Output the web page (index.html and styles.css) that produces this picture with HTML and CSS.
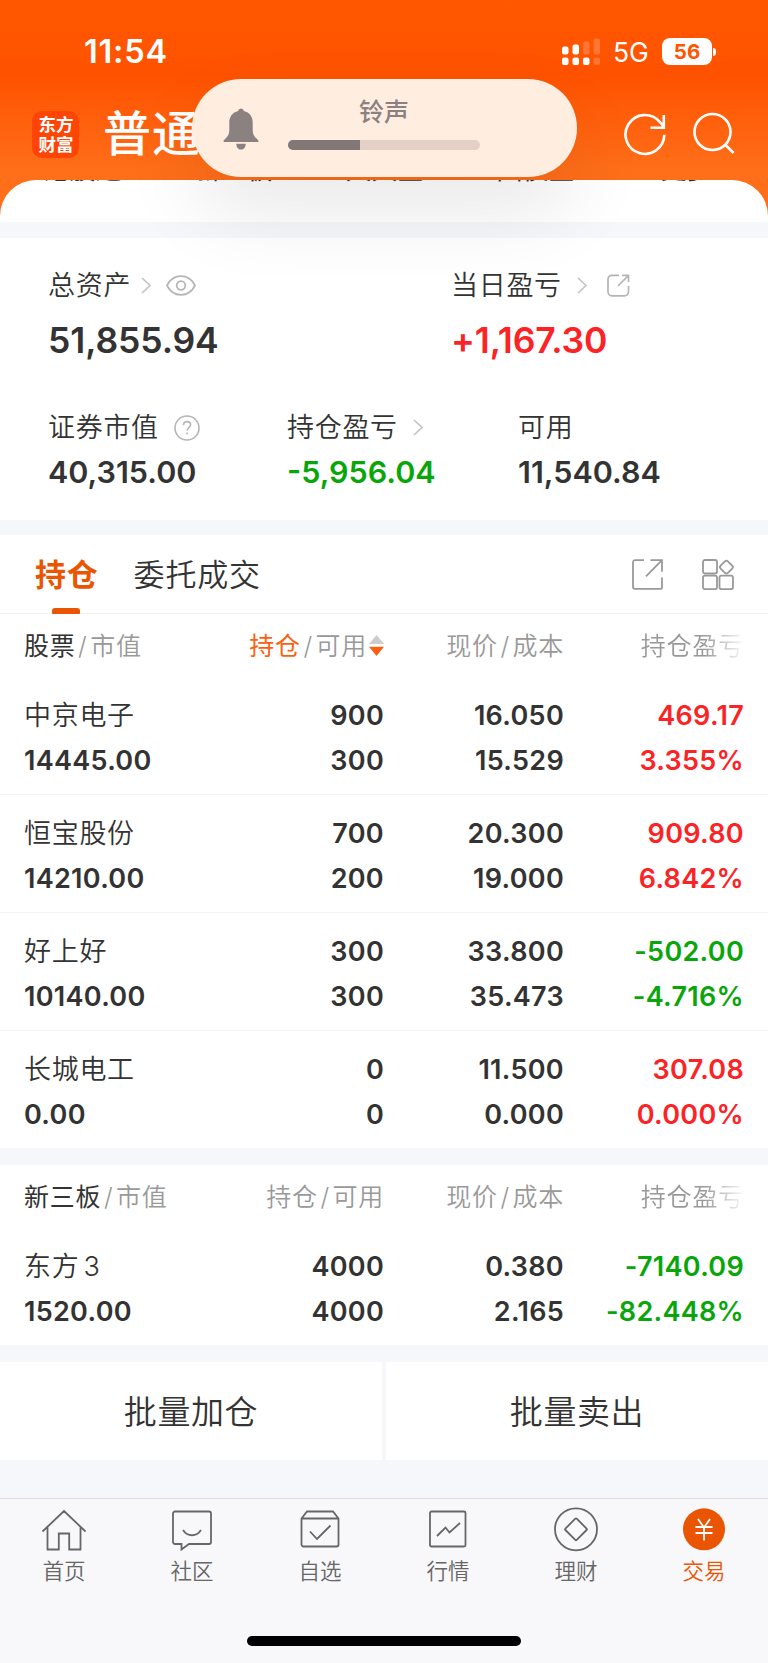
FILE: index.html
```html
<!DOCTYPE html>
<html lang="zh-CN">
<head>
	<meta charset="utf-8">
	<title>普通交易</title>
	<link rel="stylesheet" href="styles.css">
</head>
<body>

	<div class="header">
		<div class="status-bar">
			<span class="time">11:54</span>
			<svg class="signal" width="39" height="27" viewBox="0 0 39 27" fill="#fff">
				<rect x="0" y="8.500" width="6.500" height="8" rx="2"/>
				<rect x="10.500" y="6.500" width="6.500" height="10" rx="2"/>
				<rect x="21" y="3.500" width="6.500" height="13" rx="2" opacity="0.2"/>
				<rect x="31.500" y="0.500" width="6.500" height="16" rx="2" opacity="0.2"/>
				<rect x="0" y="19.500" width="6.500" height="7.500" rx="2"/>
				<rect x="10.500" y="19.500" width="6.500" height="7.500" rx="2"/>
				<rect x="21" y="19.500" width="6.500" height="7.500" rx="2"/>
				<rect x="31.500" y="19.500" width="6.500" height="7.500" rx="2" opacity="0.2"/>
			</svg>
			<span class="network">5G</span>
			<span class="battery">56</span>
			<span class="battery-tip"></span>
		</div>
		<div class="title-bar">
			<div class="logo">东方<br>财富</div>
			<div class="title">普通</div>
			<svg class="icon-refresh" width="44" height="44" viewBox="0 0 44 44" fill="none" stroke="#fff" stroke-width="2.600">
				<path d="M41.300 22.800A19.400 19.400 0 1 1 36.500 9.700L40 13.500M40.800 3v12.700H27.500"/>
			</svg>
			<svg class="icon-search" width="44" height="44" viewBox="0 0 44 44" fill="none" stroke="#fff" stroke-width="2.600">
				<circle cx="20.500" cy="20" r="18"/>
				<path d="M33 32.500l8.500 8.500"/>
			</svg>
		</div>
	</div>

	<div class="sheet-wrap">
		<div class="sheet">
			<div class="menu">
				<span>港股通</span><span>新三板</span><span>天天宝</span><span>国债宝</span><span>更多</span>
			</div>
		</div>
	</div>

	<!-- 音量提示 -->
	<div class="volume">
		<svg class="bell" width="36" height="42" viewBox="0 0 36 42" fill="#8b8180">
			<path d="M18 0.500a3 3 0 0 0-2.900 2.600C9.500 4.500 6.300 8.800 6.300 14.500v7.500c0 4-1.300 6-3.500 8.200C1.300 31.700.5 32.300.5 33.200c0 .6.400.8 1 .8h33c.6 0 1-.2 1-.8 0-.9-.8-1.500-2.300-3-2.200-2.200-3.500-4.200-3.500-8.200v-7.500c0-5.700-3.200-10-8.800-11.400A3 3 0 0 0 18 .5z"/>
			<path d="M13.300 35.700h9.400c0 3.700-2 5.800-4.700 5.800s-4.700-2.100-4.700-5.800z"/>
		</svg>
		<div class="volume-body">
			<div class="volume-label">铃声</div>
			<div class="volume-track"><div class="volume-fill" style="width:37.500%"></div></div>
		</div>
	</div>

	<div class="assets">
		<div class="assets-main">
			<div class="asset">
				<div class="asset-label">总资产
					<svg class="arrow" width="10" height="17" viewBox="0 0 10 17"><path d="M1 1l8 7.500L1 16"/></svg>
					<svg class="icon-eye" width="30" height="21" viewBox="0 0 30 21" fill="none" stroke="#b5b5b5" stroke-width="1.700">
						<path d="M1 10.500C4 4.500 9 1.200 15 1.200s11 3.300 14 9.300c-3 6-8 9.300-14 9.300S4 16.500 1 10.500z"/>
						<circle cx="15" cy="10.500" r="4.300"/>
					</svg>
				</div>
				<div class="asset-total">51,855.94</div>
			</div>
			<div class="asset">
				<div class="asset-label">当日盈亏
					<svg class="arrow day" width="10" height="17" viewBox="0 0 10 17"><path d="M1 1l8 7.500L1 16"/></svg>
					<svg class="icon-share" width="23" height="23" viewBox="0 0 23 23" fill="none" stroke="#b5b5b5" stroke-width="1.700">
						<path d="M12 1.300H5A4 4 0 0 0 1 5.300v12.500a4 4 0 0 0 4 4h12.500a4 4 0 0 0 4-4V12"/>
						<path d="M15 1.300h6.500V8M21.500 1.300L11 12"/>
					</svg>
				</div>
				<div class="asset-total red">+1,167.30</div>
			</div>
		</div>
		<div class="assets-sub">
			<div class="asset">
				<div class="asset-label">证券市值
					<svg class="icon-help" width="26" height="26" viewBox="0 0 26 26" fill="none" stroke="#b5b5b5" stroke-width="1.600">
						<circle cx="13" cy="13" r="12"/>
						<path d="M9.500 10.300c0-2.200 1.500-3.700 3.600-3.700s3.500 1.300 3.500 3.200c0 2.700-3.500 3.200-3.500 6M13.100 17.500v2"/>
					</svg>
				</div>
				<div class="asset-value">40,315.00</div>
			</div>
			<div class="asset">
				<div class="asset-label">持仓盈亏
					<svg class="arrow hold" width="10" height="17" viewBox="0 0 10 17"><path d="M1 1l8 7.500L1 16"/></svg>
				</div>
				<div class="asset-value green">-5,956.04</div>
			</div>
			<div class="asset">
				<div class="asset-label">可用</div>
				<div class="asset-value">11,540.84</div>
			</div>
		</div>
	</div>

	<div class="tabs">
		<div class="tab active">持仓</div>
		<div class="tab">委托成交</div>
		<svg class="icon-export" width="31" height="31" viewBox="0 0 31 31" fill="none" stroke="#999" stroke-width="1.800">
			<path d="M12 1.200H3a2 2 0 0 0-2 2v24.600a2 2 0 0 0 2 2h26a1 1 0 0 0 1-1V18.500"/>
			<path d="M18.500 1.200H30v11.500M30 1.200L14 17.300"/>
		</svg>
		<svg class="icon-grid" width="33" height="31" viewBox="0 0 33 31" fill="none" stroke="#999" stroke-width="1.800">
			<rect x="1" y="1" width="14" height="13.500" rx="2"/>
			<rect x="1" y="16.700" width="14" height="13.500" rx="2"/>
			<rect x="17.500" y="16.700" width="13.500" height="13.500" rx="2"/>
			<rect x="19.300" y="3" width="10.200" height="10.200" rx="2" transform="rotate(45 24.400 8.100)"/>
		</svg>
	</div>

	<div class="table">
		<div class="thead">
			<div><b>股票</b><i>/</i>市值</div>
			<div><em>持仓</em><i>/</i>可用<svg class="sort" width="15" height="21" viewBox="0 0 15 21"><path d="M7.500 0L15 9H0z" fill="#ccc"/><path d="M0 11.700h15L7.500 21z" fill="#fd5f12"/></svg></div>
			<div>现价<i>/</i>成本</div>
			<div class="fade">持仓盈亏</div>
		</div>
		<div class="row">
			<div><span class="name">中京电子</span>14445.00</div>
			<div>900<br>300</div>
			<div>16.050<br>15.529</div>
			<div class="red">469.17<br>3.355%</div>
		</div>
		<div class="row">
			<div><span class="name">恒宝股份</span>14210.00</div>
			<div>700<br>200</div>
			<div>20.300<br>19.000</div>
			<div class="red">909.80<br>6.842%</div>
		</div>
		<div class="row">
			<div><span class="name">好上好</span>10140.00</div>
			<div>300<br>300</div>
			<div>33.800<br>35.473</div>
			<div class="green">-502.00<br>-4.716%</div>
		</div>
		<div class="row">
			<div><span class="name">长城电工</span>0.00</div>
			<div>0<br>0</div>
			<div>11.500<br>0.000</div>
			<div class="red">307.08<br>0.000%</div>
		</div>
	</div>

	<div class="table neeq">
		<div class="thead">
			<div><b>新三板</b><i>/</i>市值</div>
			<div>持仓<i>/</i>可用</div>
			<div>现价<i>/</i>成本</div>
			<div class="fade">持仓盈亏</div>
		</div>
		<div class="row">
			<div><span class="name">东方<span class="digit">3</span></span>1520.00</div>
			<div>4000<br>4000</div>
			<div>0.380<br>2.165</div>
			<div class="green">-7140.09<br>-82.448%</div>
		</div>
	</div>

	<div class="actions">
		<div class="action">批量加仓</div>
		<div class="action">批量卖出</div>
	</div>

	<div class="nav">
		<div class="nav-item">
			<svg width="46" height="46" viewBox="0 0 46 46">
				<path d="M1.500 24.500L23 4l21.500 20.500M6.500 20.500v22h11.300V26.500h10.400v16h11.300v-22"/>
			</svg>
			首页
		</div>
		<div class="nav-item">
			<svg width="46" height="46" viewBox="0 0 46 46">
				<path d="M6 4.500h34a2 2 0 0 1 2 2V35a2 2 0 0 1-2 2H20l-7.500 5.500V37H6a2 2 0 0 1-2-2V6.500a2 2 0 0 1 2-2z"/>
				<path d="M14 23c4.500 7 13.500 7 18 0"/>
			</svg>
			社区
		</div>
		<div class="nav-item">
			<svg width="46" height="46" viewBox="0 0 46 46">
				<path d="M4.500 11.500L10 4.500h26l5.500 7v26a2 2 0 0 1-2 2h-33a2 2 0 0 1-2-2zM4.500 11.500h37M13 24.500l7 7.500 13.500-13.500"/>
			</svg>
			自选
		</div>
		<div class="nav-item">
			<svg width="46" height="46" viewBox="0 0 46 46">
				<rect x="5" y="4.500" width="35.500" height="35" rx="1.500"/>
				<path d="M12 29l8.500-8.500 4 5L35 16"/>
			</svg>
			行情
		</div>
		<div class="nav-item">
			<svg width="46" height="46" viewBox="0 0 46 46">
				<circle cx="23" cy="22.300" r="21"/>
				<rect x="15" y="14.300" width="16" height="16" rx="1" transform="rotate(45 23 22.300)"/>
			</svg>
			理财
		</div>
		<div class="nav-item active">
			<svg width="46" height="46" viewBox="0 0 46 46">
				<circle cx="23" cy="22.300" r="21" fill="#ea5504" stroke="none"/>
				<path d="M17 12l6 8.500 6-8.500M23 20v13.500M14.500 20h17M14.500 26h17" stroke="#fff"/>
			</svg>
			交易
		</div>
	</div>
	<div class="home-indicator"></div>

</body>
</html>
```
FILE: styles.css
```css
* {
	box-sizing: border-box;
}
body {
	margin: 0;
	width: 768px;
	height: 1663px;
	overflow: hidden;
	position: relative;
	background: #f6f7fa;
	color: #333;
	font-family: Inter, "Noto Sans CJK SC", sans-serif;
}
svg {
	display: block;
	flex: none;
}
.red {
	color: #fc2326;
}
.green {
	color: #09a60b;
}

/* 顶部 */
.header {
	height: 180px;
	background: linear-gradient(#ff5800, #ff5200 75px, #ff6e19 170px);
	color: #fff;
}
.status-bar {
	display: flex;
	align-items: center;
	height: 79px;
	padding: 24px 0 0 84px;
}
.time {
	width: 478px;
	font-size: 32.500px;
	font-weight: 600;
	letter-spacing: 0.800px;
	line-height: 40px;
}
.network {
	width: 48px;
	margin-left: 12px;
	font-size: 26.500px;
	line-height: 40px;
}
.battery {
	width: 50px;
	height: 27px;
	margin-left: 1px;
	border-radius: 8px;
	background: #fff;
	color: #ff5500;
	font-size: 20.500px;
	font-weight: 700;
	line-height: 28px;
	text-align: center;
}
.battery-tip {
	width: 3px;
	height: 8px;
	margin-left: 1px;
	border-radius: 0 3px 3px 0;
	background: #fff;
}
.title-bar {
	display: flex;
	align-items: center;
	height: 101px;
	padding: 9px 32px 0 32px;
}
.logo {
	width: 47px;
	height: 47px;
	padding: 4px 0 0 1px;
	border-radius: 10px;
	background: #ff4505;
	font-size: 17.500px;
	font-weight: 700;
	line-height: 20px;
	text-align: center;
}
.title {
	flex: 1;
	margin-left: 24px;
	font-size: 48px;
	font-weight: 500;
	letter-spacing: 1px;
	line-height: 60px;
}
.icon-search {
	margin-left: 25px;
}

.sheet-wrap {
	height: 42px;
	background: #ff6e19;
}
.sheet {
	height: 42px;
	overflow: hidden;
	border-radius: 36px 36px 0 0;
	background: #fff;
}
.menu {
	display: grid;
	grid-template-columns: repeat(5, 151px);
	margin-top: -27px;
	padding-left: 7px;
	font-size: 26px;
	line-height: 34px;
	text-align: center;
}

/* 浮在页面上的音量提示 */
.volume {
	position: absolute;
	left: 192px;
	top: 79px;
	display: flex;
	width: 385px;
	height: 98px;
	padding: 29px 97px 0 31px;
	border-radius: 49px;
	background: #ffeee0;
	box-shadow: 0 36px 80px rgba(0, 0, 0, 0.090);
}
.volume-body {
	flex: 1;
	margin-left: 29px;
	margin-top: -12px;
}
.volume-label {
	color: #8b8180;
	font-size: 25px;
	font-weight: 500;
	line-height: 32px;
	text-align: center;
}
.volume-track {
	height: 10px;
	margin-top: 12px;
	overflow: hidden;
	border-radius: 5px;
	background: #e4d0c6;
}
.volume-fill {
	height: 10px;
	background: #817776;
}

/* 资产 */
.assets {
	height: 282px;
	margin-top: 16px;
	padding: 29px 48px 0;
	background: #fff;
}
.assets-main {
	display: grid;
	grid-template-columns: 403px 1fr;
	height: 142px;
}
.assets-sub {
	display: grid;
	grid-template-columns: 239px 231px 1fr;
}
.asset-label {
	display: flex;
	align-items: center;
	height: 37px;
	font-size: 27px;
	font-weight: 350;
	letter-spacing: 0.700px;
	line-height: 37px;
	white-space: nowrap;
}
.arrow {
	margin-left: 10px;
	fill: none;
	stroke: #c4c4c4;
	stroke-width: 1.700;
}
.arrow.day,
.arrow.hold {
	margin-left: 15px;
}
.icon-eye {
	margin-left: 15px;
}
.icon-share {
	margin-left: 20px;
}
.icon-help {
	margin-left: 15px;
}
.asset-total {
	margin-top: 15px;
	font-size: 35.500px;
	font-weight: 600;
	letter-spacing: -0.100px;
	line-height: 44px;
}
.asset-value {
	margin-top: 8px;
	font-size: 30.500px;
	font-weight: 600;
	line-height: 36px;
}

/* 持仓 */
.tabs {
	display: flex;
	align-items: center;
	height: 79px;
	margin-top: 15px;
	padding: 0 33px 0 35px;
	border-bottom: 1px solid #efeff1;
	background: #fff;
}
.tab {
	position: relative;
	height: 78px;
	margin-right: 35px;
	font-size: 31px;
	font-weight: 350;
	letter-spacing: 0.800px;
	line-height: 80px;
}
.tab.active {
	color: #ea5504;
	font-weight: 700;
}
.tab.active::after {
	content: "";
	position: absolute;
	left: 17px;
	bottom: -1px;
	width: 28px;
	height: 6px;
	border-radius: 3px 3px 1px 1px;
	background: #ea5504;
}
.icon-export {
	margin-left: auto;
}
.icon-grid {
	margin-left: 39px;
}
.table {
	background: #fff;
}
.thead,
.row {
	display: grid;
	grid-template-columns: 196px 164px 180px 180px;
	padding: 0 24px;
	text-align: right;
}
.thead > :first-child,
.row > :first-child {
	text-align: left;
}
.thead {
	height: 63px;
	color: #999;
	font-size: 25px;
	font-weight: 350;
	letter-spacing: 0.800px;
	line-height: 64px;
	white-space: nowrap;
}
.thead b {
	color: #333;
	font-weight: 400;
}
.thead em {
	color: #fd5f12;
	font-style: normal;
	font-weight: 400;
}
.thead i {
	margin: 0 2.500px;
	font-style: normal;
}
.sort {
	display: inline-block;
	margin-left: 2px;
	vertical-align: -1px;
}
.fade {
	-webkit-mask-image: linear-gradient(90deg, #000 140px, transparent 182px);
	mask-image: linear-gradient(90deg, #000 140px, transparent 182px);
}
.row {
	height: 118px;
	padding-top: 17px;
	border-bottom: 1px solid #f4f4f6;
	font-size: 27px;
	font-weight: 600;
	letter-spacing: 0.300px;
	line-height: 44.500px;
}
.row:last-child {
	height: 117px;
	border-bottom: 0;
}
.name {
	display: block;
	font-weight: 350;
	letter-spacing: 0.700px;
}
.digit {
	margin-left: 4px;
}
.neeq {
	margin-top: 17px;
}

.actions {
	display: grid;
	grid-template-columns: 382px 382px;
	gap: 4px;
	margin-top: 17px;
}
.action {
	height: 98px;
	background: #fff;
	font-size: 33px;
	font-weight: 350;
	letter-spacing: 0.600px;
	line-height: 101px;
	text-align: center;
}

/* 底部导航 */
.nav {
	display: grid;
	grid-template-columns: repeat(6, 128px);
	height: 165px;
	margin-top: 38px;
	padding-top: 8px;
	border-top: 1px solid #dedee2;
	background: #f8f8fb;
}
.nav-item {
	color: #666;
	font-size: 21.500px;
	font-weight: 350;
	line-height: 36px;
	text-align: center;
}
.nav-item svg {
	margin: 0 auto;
	fill: none;
	stroke: #666;
	stroke-width: 1.800;
}
.nav-item.active {
	color: #ea5504;
}
.home-indicator {
	position: absolute;
	left: 247px;
	bottom: 17px;
	width: 274px;
	height: 10px;
	border-radius: 5px;
	background: #000;
}
```
